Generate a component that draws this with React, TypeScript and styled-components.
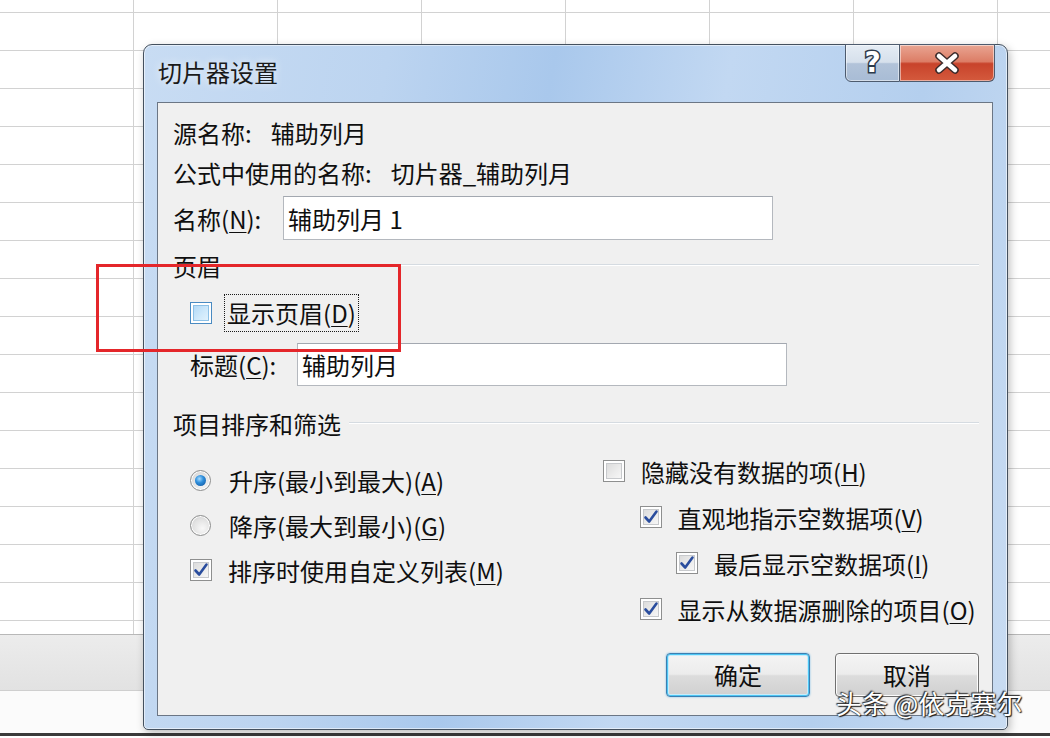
import React from 'react';
import styled, { createGlobalStyle, css } from 'styled-components';

const GlobalStyle = createGlobalStyle`
  html, body {
    margin: 0;
    padding: 0;
    background: #ffffff;
  }
  body {
    font-family: 'Noto Sans CJK SC', 'Noto Sans', 'Liberation Sans', sans-serif;
    color: #0f0f0f;
  }
`;

interface OptionI {
  label: string;
  key: string;
  level: number;
  checked: boolean;
  kind: 'radio' | 'check';
}

const leftOptions: OptionI[] = [
  { label: '升序(最小到最大)', key: 'A', level: 0, checked: true, kind: 'radio' },
  { label: '降序(最大到最小)', key: 'G', level: 0, checked: false, kind: 'radio' },
  { label: '排序时使用自定义列表', key: 'M', level: 0, checked: true, kind: 'check' },
];

const rightOptions: OptionI[] = [
  { label: '隐藏没有数据的项', key: 'H', level: 0, checked: false, kind: 'check' },
  { label: '直观地指示空数据项', key: 'V', level: 1, checked: true, kind: 'check' },
  { label: '最后显示空数据项', key: 'I', level: 2, checked: true, kind: 'check' },
  { label: '显示从数据源删除的项目', key: 'O', level: 1, checked: true, kind: 'check' },
];

const Tick = () => (
  <svg width='16' height='16' viewBox='0 0 16 16'>
    <path
      d='M2.5 8.5 L6.2 12.5 L13.5 2.5'
      fill='none'
      stroke='#2a4d9e'
      strokeWidth='2.6'
      strokeLinecap='round'
      strokeLinejoin='round'
    />
  </svg>
);

const Cross = () => (
  <svg width='30' height='22' viewBox='0 0 30 22'>
    <path
      d='M7 4 L23 18 M23 4 L7 18'
      stroke='#3b2a2a'
      strokeWidth='7.5'
      strokeLinecap='round'
    />
    <path
      d='M7 4 L23 18 M23 4 L7 18'
      stroke='#ffffff'
      strokeWidth='4.6'
      strokeLinecap='round'
    />
  </svg>
);

const Label = ({ text, k }: { text: string; k: string }) => (
  <>
    {text}(<Mnemonic>{k}</Mnemonic>)
  </>
);

const App: React.FC = () => {
  const renderOption = (o: OptionI) => (
    <OptionRow key={o.key} $level={o.level}>
      {o.kind === 'radio' ? (
        <Radio $checked={o.checked} />
      ) : (
        <CheckBox $checked={o.checked}>{o.checked && <Tick />}</CheckBox>
      )}
      <OptionText $radio={o.kind === 'radio'}>
        <Label text={o.label} k={o.key} />
      </OptionText>
    </OptionRow>
  );

  return (
    <Desktop>
      <GlobalStyle />
      <Sheet />
      <SheetTabs />
      <StatusBar />

      <Window>
        <TitleBar>
          <Title>切片器设置</Title>
          <CaptionGroup>
            <CaptionButton $variant='help'>
              <HelpGlyph>?</HelpGlyph>
            </CaptionButton>
            <CaptionButton $variant='close'>
              <Cross />
            </CaptionButton>
          </CaptionGroup>
        </TitleBar>

        <Client>
          <Row $mt={15}>
            <Text>源名称:</Text>
            <Value>辅助列月</Value>
          </Row>
          <Row $mt={10}>
            <Text>公式中使用的名称:</Text>
            <Value>切片器_辅助列月</Value>
          </Row>
          <FieldRow $mt={8}>
            <FieldLabel $w={110}>
              名称(<Mnemonic>N</Mnemonic>):
            </FieldLabel>
            <TextBox>辅助列月 1</TextBox>
          </FieldRow>

          <GroupHeading $mt={10}>页眉</GroupHeading>
          <CheckRow>
            <CheckBox $hot />
            <FocusLabel>
              显示页眉(<Mnemonic>D</Mnemonic>)
            </FocusLabel>
          </CheckRow>
          <FieldRow $mt={10} $indent={17}>
            <FieldLabel $w={107}>
              标题(<Mnemonic>C</Mnemonic>):
            </FieldLabel>
            <TextBox $h={43}>辅助列月</TextBox>
          </FieldRow>

          <GroupHeading $mt={22}>项目排序和筛选</GroupHeading>
          <Columns>
            <Column $pt={24} $gap={9}>
              {leftOptions.map(renderOption)}
            </Column>
            <Column $pt={15} $gap={10}>
              {rightOptions.map(renderOption)}
            </Column>
          </Columns>

          <ButtonRow>
            <PushButton $default>确定</PushButton>
            <PushButton>取消</PushButton>
          </ButtonRow>
        </Client>
      </Window>

      <Annotation />
      <Watermark>头条 @依克赛尔</Watermark>
    </Desktop>
  );
};

const Desktop = styled.div`
  position: relative;
  width: 1050px;
  height: 738px;
  overflow: hidden;
  background: #ffffff;
`;

const Sheet = styled.div`
  height: 634px;
  background-color: #ffffff;
  background-image: linear-gradient(to right, #d2d2d2 1px, transparent 1px),
    linear-gradient(to bottom, #d2d2d2 1px, transparent 1px);
  background-size: 144px 38px;
  background-position: 133px 12px;
`;

const SheetTabs = styled.div`
  height: 55px;
  border-top: 1px solid #b8b8b8;
  background: linear-gradient(#ececec, #e2e2e2);
`;

const StatusBar = styled.div`
  height: 42px;
  border-top: 1px solid #cfcfcf;
  border-bottom: 3px solid #3a3a3a;
  background: #fbfbfb;
`;

const Window = styled.div`
  position: absolute;
  left: 143px;
  top: 44px;
  width: 865px;
  height: 686px;
  box-sizing: border-box;
  display: flex;
  flex-direction: column;
  border: 1px solid #44505e;
  border-radius: 9px 9px 5px 5px;
  background: linear-gradient(
    100deg,
    #c8dcf3 0%,
    #bcd4f0 25%,
    #a9c8ec 42%,
    #c2d8f2 60%,
    #b4cfee 80%,
    #c9dcf2 100%
  );
  box-shadow: inset 0 0 0 1px rgba(255, 255, 255, 0.55), 2px 3px 8px rgba(0, 0, 0, 0.25);
`;

const TitleBar = styled.div`
  height: 57px;
  display: flex;
  align-items: flex-start;
  justify-content: space-between;
  padding: 0 12px 0 14px;
  flex-shrink: 0;
`;

const Title = styled.div`
  margin-top: 9px;
  font-size: 24px;
  line-height: 36px;
  color: #1a1a1a;
  text-shadow: 0 0 8px rgba(255, 255, 255, 0.9);
`;

const CaptionGroup = styled.div`
  display: flex;
  margin-top: -1px;
`;

const helpStyle = css`
  width: 55px;
  border-radius: 0 0 0 6px;
  background: linear-gradient(#e5ecf4 0%, #d6e0ec 48%, #b2c3d9 52%, #a8bcd5 100%);
`;

const closeStyle = css`
  width: 95px;
  border-left: none;
  border-radius: 0 0 6px 0;
  background: linear-gradient(#e9a592 0%, #dc7d66 46%, #c8432b 52%, #d45a3d 100%);
`;

const CaptionButton = styled.div<{ $variant: 'help' | 'close' }>`
  height: 38px;
  box-sizing: border-box;
  display: flex;
  align-items: center;
  justify-content: center;
  border: 1px solid #4d5b6e;
  box-shadow: inset 0 0 0 1px rgba(255, 255, 255, 0.5);
  ${(p) => (p.$variant === 'help' ? helpStyle : closeStyle)}
`;

const HelpGlyph = styled.span`
  font-family: 'DejaVu Sans', 'Liberation Sans', sans-serif;
  font-weight: bold;
  font-size: 28px;
  line-height: 1;
  color: #ffffff;
  -webkit-text-stroke: 3px #2d3a4a;
  paint-order: stroke fill;
`;

const Client = styled.div`
  flex: 1;
  margin: 0 14px 13px 13px;
  padding: 0 13px 18px 15px;
  display: flex;
  flex-direction: column;
  border: 1px solid #6b7685;
  background: #f0f0f0;
  font-size: 24px;
`;

const Row = styled.div<{ $mt: number }>`
  display: flex;
  height: 30px;
  line-height: 30px;
  margin-top: ${(p) => p.$mt}px;
  white-space: nowrap;
`;

const Text = styled.span`
  margin-right: 19px;
`;

const Value = styled.span``;

const FieldRow = styled.div<{ $mt: number; $indent?: number }>`
  display: flex;
  align-items: center;
  margin-top: ${(p) => p.$mt}px;
  padding-left: ${(p) => p.$indent || 0}px;
`;

const FieldLabel = styled.span<{ $w: number }>`
  width: ${(p) => p.$w}px;
  white-space: nowrap;
`;

const TextBox = styled.div<{ $h?: number }>`
  width: 490px;
  height: ${(p) => p.$h || 44}px;
  box-sizing: border-box;
  padding: 0 4px;
  display: flex;
  align-items: center;
  background: #ffffff;
  border: 1px solid #b4b8be;
  border-top-color: #a3a8b0;
`;

const GroupHeading = styled.div<{ $mt: number }>`
  display: flex;
  align-items: center;
  height: 30px;
  margin-top: ${(p) => p.$mt}px;
  white-space: nowrap;

  &::after {
    content: '';
    flex: 1;
    margin-left: 8px;
    height: 1px;
    background: #d5dbe1;
    border-bottom: 1px solid #ffffff;
  }
`;

const Mnemonic = styled.u`
  text-decoration-thickness: 1px;
  text-underline-offset: 3px;
`;

const CheckRow = styled.div`
  display: flex;
  align-items: center;
  height: 40px;
  margin-top: 13px;
  padding-left: 17px;
`;

const CheckBox = styled.span<{ $checked?: boolean; $hot?: boolean }>`
  width: 22px;
  height: 22px;
  box-sizing: border-box;
  flex-shrink: 0;
  display: flex;
  align-items: center;
  justify-content: center;
  border: 1px solid ${(p) => (p.$hot ? '#4a8bc2' : '#8e8f8f')};
  background: ${(p) =>
    p.$hot
      ? 'linear-gradient(135deg, #a9d4f5 0%, #cfe9fb 55%, #eaf6fe 100%)'
      : 'linear-gradient(135deg, #d6d6d6 0%, #ececec 55%, #fbfbfb 100%)'};
  box-shadow: inset 0 0 0 2px #ffffff, inset 0 0 0 3px ${(p) => (p.$hot ? '#8cc0e6' : '#c7c9cc')};
`;

const FocusLabel = styled.span`
  margin-left: 12px;
  padding: 2px 2px;
  border: 1px dotted #1a1a1a;
  line-height: 32px;
  white-space: nowrap;
`;

const Columns = styled.div`
  display: grid;
  grid-template-columns: 413px 1fr;
  padding-left: 17px;
`;

const Column = styled.div<{ $pt: number; $gap: number }>`
  display: flex;
  flex-direction: column;
  gap: ${(p) => p.$gap}px;
  padding-top: ${(p) => p.$pt}px;
`;

const OptionRow = styled.div<{ $level: number }>`
  display: flex;
  align-items: center;
  height: 36px;
  padding-left: ${(p) => p.$level * 36.5}px;
  white-space: nowrap;
`;

const Radio = styled.span<{ $checked: boolean }>`
  position: relative;
  width: 21px;
  height: 21px;
  box-sizing: border-box;
  flex-shrink: 0;
  border-radius: 50%;
  border: 1px solid #8e8f8f;
  background: radial-gradient(circle at 60% 65%, #f8f8f8 0%, #e2e2e2 55%, #c8c8c8 100%);
  box-shadow: inset 0 0 0 1px #ffffff;

  &::after {
    content: '';
    display: ${(p) => (p.$checked ? 'block' : 'none')};
    position: absolute;
    left: 4px;
    top: 4px;
    width: 11px;
    height: 11px;
    border-radius: 50%;
    background: radial-gradient(circle at 40% 35%, #a7dcff 0%, #2f8fdc 40%, #0f4f96 100%);
  }
`;

const OptionText = styled.span<{ $radio?: boolean }>`
  margin-left: ${(p) => (p.$radio ? 18 : 16)}px;
`;

const ButtonRow = styled.div`
  display: flex;
  justify-content: flex-end;
  gap: 25px;
  margin-top: auto;
`;

const PushButton = styled.div<{ $default?: boolean }>`
  width: 144px;
  height: 44px;
  box-sizing: border-box;
  display: flex;
  align-items: center;
  justify-content: center;
  border-radius: 4px;
  font-size: 24px;
  line-height: 24px;
  border: 1px solid ${(p) => (p.$default ? '#3c7fb1' : '#707070')};
  background: linear-gradient(#f4f4f4 0%, #ececec 48%, #dcdcdc 52%, #d0d0d0 100%);
  box-shadow: ${(p) =>
    p.$default
      ? 'inset 0 0 0 1px #4cc6f4, inset 0 0 0 2px #c8ecfb, 0 0 2px #6cb7e6'
      : 'inset 0 0 0 1px #fcfcfc'};
`;

const Annotation = styled.div`
  position: absolute;
  left: 96px;
  top: 264px;
  width: 305px;
  height: 88px;
  box-sizing: border-box;
  border: 3px solid #e4262a;
  pointer-events: none;
`;

const Watermark = styled.div`
  position: absolute;
  left: 836px;
  top: 690px;
  font-size: 26px;
  line-height: 26px;
  color: #ffffff;
  white-space: nowrap;
  text-shadow: 0 0 2px #1a1a1a, 1px 1px 1px #1a1a1a, -1px -1px 1px #3a3a3a;
`;

export default App;
